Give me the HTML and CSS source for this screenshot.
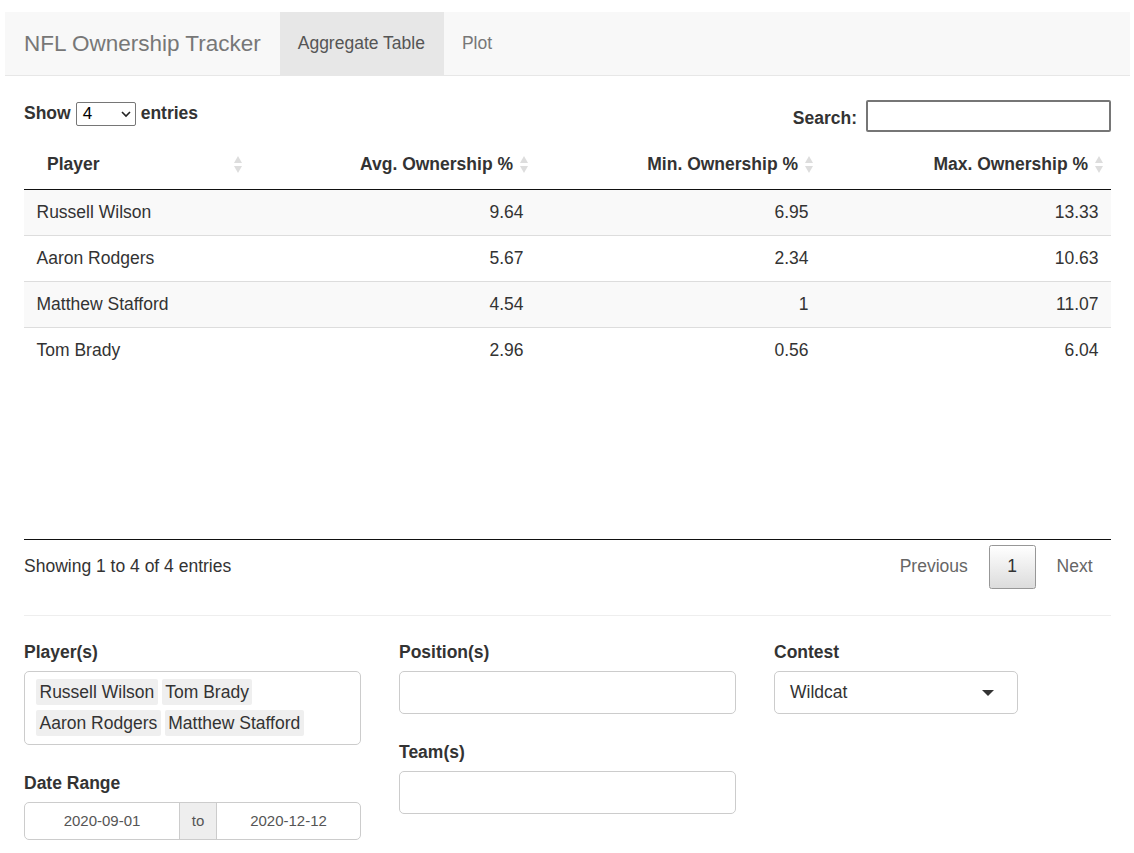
FILE: index.html
```html
<!DOCTYPE html>
<html lang="en">
<head>
    <meta charset="UTF-8">
    <title>NFL Ownership Tracker</title>
    <link rel="stylesheet" href="styles.css">
</head>
<body>
<nav class="navbar">
    <span class="brand">NFL Ownership Tracker</span>
    <ul class="nav">
        <li class="active">Aggregate Table</li>
        <li>Plot</li>
    </ul>
</nav>

<div class="page">
    <div class="dt-top">
        <label class="dt-length">Show
            <span class="mini-select">4
                <svg width="12" height="8" viewBox="0 0 12 8"><path d="M2 2 L6 6 L10 2" fill="none" stroke="#222" stroke-width="1.6"/></svg>
            </span>
            entries</label>
        <label class="dt-search">Search: <span class="search-box"></span></label>
    </div>

    <div class="dt-scroll">
        <table class="dt">
            <colgroup>
                <col style="width:226px">
                <col style="width:286px">
                <col style="width:285px">
                <col style="width:290px">
            </colgroup>
            <thead>
            <tr>
                <th class="left">Player<i class="sort"></i></th>
                <th>Avg. Ownership %<i class="sort"></i></th>
                <th>Min. Ownership %<i class="sort"></i></th>
                <th>Max. Ownership %<i class="sort"></i></th>
            </tr>
            </thead>
            <tbody>
            <tr class="odd"><td class="left">Russell Wilson</td><td>9.64</td><td>6.95</td><td>13.33</td></tr>
            <tr><td class="left">Aaron Rodgers</td><td>5.67</td><td>2.34</td><td>10.63</td></tr>
            <tr class="odd"><td class="left">Matthew Stafford</td><td>4.54</td><td>1</td><td>11.07</td></tr>
            <tr><td class="left">Tom Brady</td><td>2.96</td><td>0.56</td><td>6.04</td></tr>
            </tbody>
        </table>
    </div>

    <div class="dt-bottom">
        <div class="dt-info">Showing 1 to 4 of 4 entries</div>
        <div class="pager">
            <span class="pg disabled">Previous</span>
            <span class="pg current">1</span>
            <span class="pg disabled">Next</span>
        </div>
    </div>

    <hr>

    <div class="filters">
        <div class="col">
            <div class="group">
                <label>Player(s)</label>
                <div class="field multi">
                    <span class="tag">Russell Wilson</span><span class="tag">Tom Brady</span>
                    <span class="tag">Aaron Rodgers</span><span class="tag">Matthew Stafford</span>
                </div>
            </div>
            <div class="group">
                <label>Date Range</label>
                <div class="daterange">
                    <span class="date first">2020-09-01</span>
                    <span class="to">to</span>
                    <span class="date">2020-12-12</span>
                </div>
            </div>
        </div>
        <div class="col">
            <div class="group">
                <label>Position(s)</label>
                <div class="field"></div>
            </div>
            <div class="group">
                <label>Team(s)</label>
                <div class="field"></div>
            </div>
        </div>
        <div class="col">
            <div class="group">
                <label>Contest</label>
                <div class="field single">Wildcat<span class="caret"></span></div>
            </div>
        </div>
    </div>
</div>
</body>
</html>
```

FILE: styles.css
```css
*{
    box-sizing: border-box;
}
body{
    margin: 0;
    padding: 12px 4px 0 5px;
    font-family: "Liberation Sans", Arial, Helvetica, sans-serif;
    font-size: 17.5px;
    line-height: 25px;
    color: #333;
    background: #fff;
}
ul{
    margin: 0;
    padding: 0;
    list-style: none;
}

/* navbar */
.navbar{
    display: flex;
    height: 64px;
    background: #f8f8f8;
    border-bottom: 1px solid #e7e7e7;
    margin-bottom: 25px;
}
.brand{
    padding: 0 19px;
    font-size: 22.5px;
    line-height: 63px;
    color: #777;
}
.nav{
    display: flex;
}
.nav li{
    padding: 0 19px 0 18px;
    line-height: 63px;
    color: #777;
}
.nav li.active{
    background: #e7e7e7;
    color: #555;
}

.page{
    padding: 0 19px;
}

/* table controls */
.dt-top{
    display: flex;
    justify-content: space-between;
    align-items: flex-start;
    height: 39px;
    font-weight: bold;
}
.dt-length{
    display: flex;
    align-items: center;
    gap: 5px;
    margin-top: 0;
}
.mini-select{
    display: flex;
    align-items: center;
    justify-content: space-between;
    width: 60px;
    height: 24px;
    padding: 0 3px 0 6px;
    border: 1px solid #767676;
    border-radius: 2px;
    font-weight: normal;
    color: #000;
    font-size: 17px;
    line-height: 22px;
}
.dt-search{
    display: flex;
    align-items: center;
    gap: 9px;
    margin-top: 4px;
}
.search-box{
    display: block;
    width: 245px;
    height: 32px;
    border: 2px solid #767676;
    border-radius: 2px;
    margin-top: -5px;
}

/* table */
.dt-scroll{
    height: 400px;
    border-bottom: 1px solid #111;
}
.dt{
    width: 100%;
    border-collapse: collapse;
    table-layout: fixed;
}
.dt th{
    position: relative;
    padding: 12px 23px 12px 23px;
    text-align: right;
    font-weight: bold;
    border-bottom: 1px solid #111;
}
.dt td{
    padding: 10px 12.5px 10px 12.5px;
    text-align: right;
    border-top: 1px solid #ddd;
}
.dt tbody tr:first-child td{
    border-top: 0;
}
.dt .left{
    text-align: left;
}
.dt tr.odd td{
    background: #f9f9f9;
}
.sort{
    position: absolute;
    right: 7px;
    top: 50%;
    width: 9px;
    height: 17px;
    margin-top: -9px;
}
.sort:before,
.sort:after{
    content: "";
    position: absolute;
    left: 0;
    border-left: 4.5px solid transparent;
    border-right: 4.5px solid transparent;
}
.sort:before{
    top: 0;
    border-bottom: 7px solid #ddd;
}
.sort:after{
    bottom: 0;
    border-top: 7px solid #ddd;
}

/* footer */
.dt-bottom{
    display: flex;
    justify-content: space-between;
    align-items: center;
    padding-top: 5px;
}
.dt-info{
    margin-top: -2px;
}
.pager{
    display: flex;
}
.pg{
    display: block;
    margin-left: 2.5px;
    padding: 8px 17.5px 9px;
    border: 1px solid transparent;
    border-radius: 2.5px;
    color: #666;
}
.pg.current{
    color: #333;
    border-color: #979797;
    background: linear-gradient(to bottom, #fff 0%, #dcdcdc 100%);
}

hr{
    margin: 26px 0 24px;
    border: 0;
    border-top: 1px solid #eee;
}

/* filters */
.filters{
    display: grid;
    grid-template-columns: 337px 337px 337px;
    column-gap: 38px;
}
.group{
    margin-bottom: 26px;
}
.group label{
    display: block;
    font-weight: bold;
    margin-bottom: 6px;
}
.field{
    height: 43px;
    border: 1px solid #ccc;
    border-radius: 5px;
    background: #fff;
}
.field.multi{
    height: 74px;
    padding: 7px 11px 0;
    line-height: 26px;
}
.tag{
    display: inline-block;
    background: #efefef;
    padding: 0 3.5px;
    margin: 0 4px 5px 0;
    border-radius: 2px;
    line-height: 26px;
}
.field.single{
    position: relative;
    width: 244px;
    padding: 0 15px;
    line-height: 41px;
}
.caret{
    position: absolute;
    right: 23px;
    top: 18px;
    border-left: 6px solid transparent;
    border-right: 6px solid transparent;
    border-top: 6px solid #333;
}
.daterange{
    display: flex;
    height: 38px;
    border: 1px solid #ccc;
    border-radius: 5px;
    font-size: 15px;
    line-height: 36px;
    color: #555;
}
.date{
    flex: 1;
    text-align: center;
}
.date.first{
    flex: none;
    width: 154px;
}
.to{
    width: 38px;
    text-align: center;
    background: #eee;
    border-left: 1px solid #ccc;
    border-right: 1px solid #ccc;
}
```
